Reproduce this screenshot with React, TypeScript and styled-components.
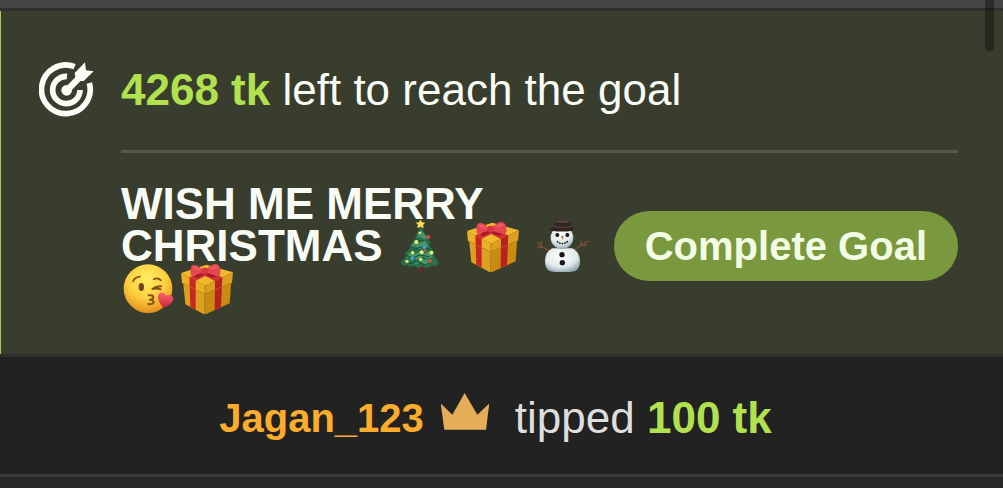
import React from "react";
import styled, { createGlobalStyle } from "styled-components";

const GlobalStyle = createGlobalStyle`
  * { box-sizing: border-box; }
  body {
    margin: 0;
    background: #292929;
    color: #f8fbf4;
    font-family: "Liberation Sans", Arial, Helvetica, sans-serif;
    overflow: hidden;
  }
`;

const Chat = styled.main`
  position: relative;
`;

const PreviousMessage = styled.div`
  height: 11px;
  background: #464546;
  border-bottom: 3px solid #2f302e;
`;

const GoalPanel = styled.section`
  padding: 51px 45px 45px 38px;
  background: #393d2e;
  border-left: 1px solid #9fcc4c;
`;

const GoalStatus = styled.header`
  display: flex;
  align-items: center;
  gap: 26px;
`;

const StatusText = styled.p`
  margin: 0;
  font-size: 44px;
  line-height: 56px;
`;

const Tokens = styled.strong`
  color: #b2e14f;
  font-weight: 700;
`;

const GoalBody = styled.div`
  display: flex;
  align-items: center;
  gap: 16px;
  margin: 32px 0 0 82px;
  padding-top: 30px;
  border-top: 3px solid #56584b;
`;

const GoalTitle = styled.h2`
  flex: 1;
  min-width: 0;
  margin: 0;
  font-size: 44px;
  line-height: 42px;
  font-weight: 700;
`;

const CompleteButton = styled.button`
  flex: none;
  height: 70px;
  padding: 0 31px;
  border: 0;
  border-radius: 35px;
  background: #7a983e;
  color: #f2fbe4;
  font-family: inherit;
  font-size: 40px;
  font-weight: 700;
  cursor: pointer;
`;

const TipMessage = styled.section`
  display: flex;
  align-items: center;
  justify-content: center;
  height: 123px;
  padding: 4px 12px 0 0;
  border-top: 3px solid #2e2f2b;
  border-bottom: 3px solid #393939;
  background: #222222;
`;

const UserLink = styled.a`
  color: #fbac2c;
  font-size: 40px;
  line-height: 48px;
  font-weight: 700;
  text-decoration: none;
`;

const CrownIcon = styled.svg`
  width: 48px;
  height: 38px;
  margin: 0 26px 12px 17px;
`;

const TipText = styled.p`
  margin: 0;
  color: #dedede;
  font-size: 44px;
  line-height: 48px;
`;

const ScrollThumb = styled.div`
  position: absolute;
  top: -8px;
  right: 9px;
  width: 9px;
  height: 59px;
  border-radius: 5px;
  background: #000;
  opacity: 0.36;
`;

const EmojiSvg = styled.svg`
  width: 58px;
  height: 52px;
  margin: -6px 0;
  vertical-align: -5px;
`;

const TargetIcon = () => (
  <svg width="56" height="56" viewBox="119 186 168 168" aria-hidden="true">
    <g fill="none" stroke="#fafcf6" strokeWidth="17">
      <path d="M226 200 A73 73 0 1 0 270 249" />
      <path d="M203 229 A41 41 0 1 0 242 270" />
    </g>
    <circle cx="202" cy="271" r="16" fill="#fafcf6" />
    <path d="M204 270L242 231" stroke="#fafcf6" strokeWidth="19" />
    <path fill="#fafcf6" d="M226 219L257 187L260 211L283 214L253 243L230 243Z" />
  </svg>
);

const Tree = () => (
  <EmojiSvg viewBox="29 30 174 156" role="img" aria-label="Christmas tree">
    <path fill="#642b21" d="M98 160H114L116 182Q107 187 98 182Z" />
    <path fill="#28704a" d="M107 48L88 83L92 84L72 108L79 109L57 133L65 135L46 157L52 167L67 164L74 171L90 168L100 175L111 168L124 175L136 167L154 167L161 158L146 137L148 128L129 103L137 99L122 79Z" />
    <path fill="#469569" d="M106 59L96 84L107 80L114 89L128 83ZM86 96L75 113L91 108L104 118L114 105L132 113L120 92L104 98ZM75 126L62 145L81 138L94 150L113 139L127 146L142 141L130 124L117 131L104 124L89 132ZM62 152L79 153L91 164L108 155L123 167L132 156L151 158L137 149L111 149L96 155Z" />
    <path fill="none" stroke="#164f3b" strokeWidth="3" d="M87 85L98 94L116 90M76 109L90 118L108 110L132 118M64 137L83 144L103 135L132 140M71 162L94 155L117 165L143 155" />
    <path fill="#ffe256" stroke="#ca9728" d="M105 29L110 37L119 38L113 45L115 55L106 50L96 54L98 44L92 38L101 37Z" />
    <g fill="#eceb73">
      <circle cx="103" cy="69" r="4" /><circle cx="93" cy="96" r="6" /><circle cx="109" cy="127" r="6" />
      <circle cx="82" cy="128" r="5" /><circle cx="138" cy="128" r="6" /><circle cx="65" cy="154" r="5" /><circle cx="106" cy="148" r="5" />
    </g>
    <g fill="#cf4b4b"><circle cx="129" cy="81" r="6" /><circle cx="134" cy="153" r="6" /><circle cx="119" cy="121" r="4" /></g>
    <g fill="#489ed1"><circle cx="117" cy="111" r="6" /><circle cx="81" cy="145" r="6" /></g>
  </EmojiSvg>
);

const Gift = () => (
  <EmojiSvg viewBox="30 30 174 156" role="img" aria-label="Gift">
    <path fill="#dda020" d="M42 86L107 112V188L49 157Z" />
    <path fill="#c98b12" d="M107 112L187 84L182 154L107 188Z" />
    <path fill="#f0b92e" d="M36 63L112 38L192 61L108 101Z" />
    <path fill="#edaf27" d="M36 63L108 101V126L39 93Z" />
    <path fill="#dca021" d="M108 101L192 61L189 92L108 126Z" />
    <path fill="#c92724" d="M61 76L80 86V173L64 165Z" />
    <path fill="#b92020" d="M138 87L160 76L156 166L137 174Z" />
    <path fill="#ce3033" d="M61 76L126 52L139 57L80 86ZM79 57L95 51L160 76L138 87Z" />
    <path fill="none" stroke="#ad7413" strokeWidth="2" d="M40 93L107 126L188 92M108 102V126" />
    <path fill="#a81827" d="M83 64Q105 49 130 65L144 74L127 76L107 66L87 77L76 76Z" />
    <path fill="#e34852" d="M101 55Q84 34 70 40Q62 47 65 67Q66 76 79 68L101 62ZM112 52Q132 31 147 38Q157 47 154 66Q150 77 140 71L114 63Z" />
    <path fill="#f35b62" d="M69 45Q80 40 97 56L77 52ZM119 51Q139 35 149 46L134 51Z" />
    <rect x="97" y="47" width="20" height="20" rx="7" fill="#d93540" />
  </EmojiSvg>
);

const Snowman = () => (
  <EmojiSvg viewBox="30 30 174 156" role="img" aria-label="Snowman">
    <defs>
      <radialGradient id="snow" cx="45%" cy="32%" r="67%">
        <stop offset="0" stopColor="#ffffff" /><stop offset=".68" stopColor="#e1e9eb" /><stop offset="1" stopColor="#98acb4" />
      </radialGradient>
    </defs>
    <g fill="none" stroke="#79503a" strokeWidth="4" strokeLinecap="round">
      <path d="M76 125L49 109L38 96M52 111L38 111M48 108L50 94" />
      <path d="M145 121L170 105L187 94M166 107L169 95M170 105L184 105" />
    </g>
    <path fill="url(#snow)" d="M82 115Q60 127 60 153Q60 177 76 184Q111 191 148 184Q165 177 165 152Q164 127 142 115Z" />
    <circle cx="111" cy="83" r="34" fill="url(#snow)" />
    <path fill="#302524" d="M87 34Q110 27 135 34L136 51L147 54Q150 59 141 62Q111 67 80 62Q71 58 78 54L88 51Z" />
    <ellipse cx="111" cy="35" rx="24" ry="4" fill="#534341" />
    <path fill="none" stroke="#6c443a" strokeWidth="3" d="M88 50Q111 55 136 50" />
    <g fill="#171717"><circle cx="97" cy="75" r="6" /><circle cx="127" cy="75" r="6" /><circle cx="111" cy="134" r="8" /><circle cx="112" cy="158" r="8" /></g>
    <path fill="#d87442" d="M108 78Q112 74 116 79L112 91Z" />
    <path fill="none" stroke="#171717" strokeWidth="5" strokeLinecap="round" strokeDasharray="1 7" d="M97 95Q112 107 128 94" />
  </EmojiSvg>
);

const KissFace = () => (
  <EmojiSvg viewBox="33 21 174 156" role="img" aria-label="Face blowing a kiss">
    <defs>
      <radialGradient id="face" cx="48%" cy="30%" r="68%">
        <stop offset="0" stopColor="#ffed63" /><stop offset=".6" stopColor="#fcce3e" /><stop offset="1" stopColor="#e69320" />
      </radialGradient>
      <linearGradient id="heart" x2="0" y2="1"><stop stopColor="#ff626b" /><stop offset="1" stopColor="#cb2439" /></linearGradient>
    </defs>
    <circle cx="114" cy="101" r="73" fill="url(#face)" />
    <ellipse cx="94" cy="96" rx="8" ry="12" fill="#70401b" />
    <g fill="none" stroke="#815019" strokeLinecap="round" strokeLinejoin="round">
      <path strokeWidth="5" d="M69 79Q75 66 90 65M131 73Q142 66 153 76" />
      <path strokeWidth="6" d="M153 94Q139 93 127 102Q141 99 152 103" />
      <path strokeWidth="6" d="M116 121Q130 119 130 127Q129 133 120 134Q132 135 131 142Q128 149 115 147" />
    </g>
    <path fill="url(#heart)" d="M159 159Q143 137 144 124Q147 111 157 113Q166 114 169 123Q179 115 187 124Q194 134 183 145Q174 155 159 159Z" />
  </EmojiSvg>
);

const Crown = () => (
  <CrownIcon viewBox="42 37 144 114" aria-hidden="true">
    <path fill="#e6ad58" d="M52 147L41 68L76 102L113 37L151 102L187 68L177 147Z" />
  </CrownIcon>
);

export default function App() {
  return (
    <>
      <GlobalStyle />
      <Chat>
        <PreviousMessage />
        <GoalPanel>
          <GoalStatus>
            <TargetIcon />
            <StatusText><Tokens>4268 tk</Tokens> left to reach the goal</StatusText>
          </GoalStatus>
          <GoalBody>
            <GoalTitle>
              WISH ME MERRY CHRISTMAS <Tree /> <Gift /> <Snowman /> <KissFace /><Gift />
            </GoalTitle>
            <CompleteButton type="button">Complete Goal</CompleteButton>
          </GoalBody>
        </GoalPanel>
        <TipMessage>
          <UserLink href="#user">Jagan_123</UserLink>
          <Crown />
          <TipText>tipped <Tokens>100 tk</Tokens></TipText>
        </TipMessage>
        <ScrollThumb />
      </Chat>
    </>
  );
}
